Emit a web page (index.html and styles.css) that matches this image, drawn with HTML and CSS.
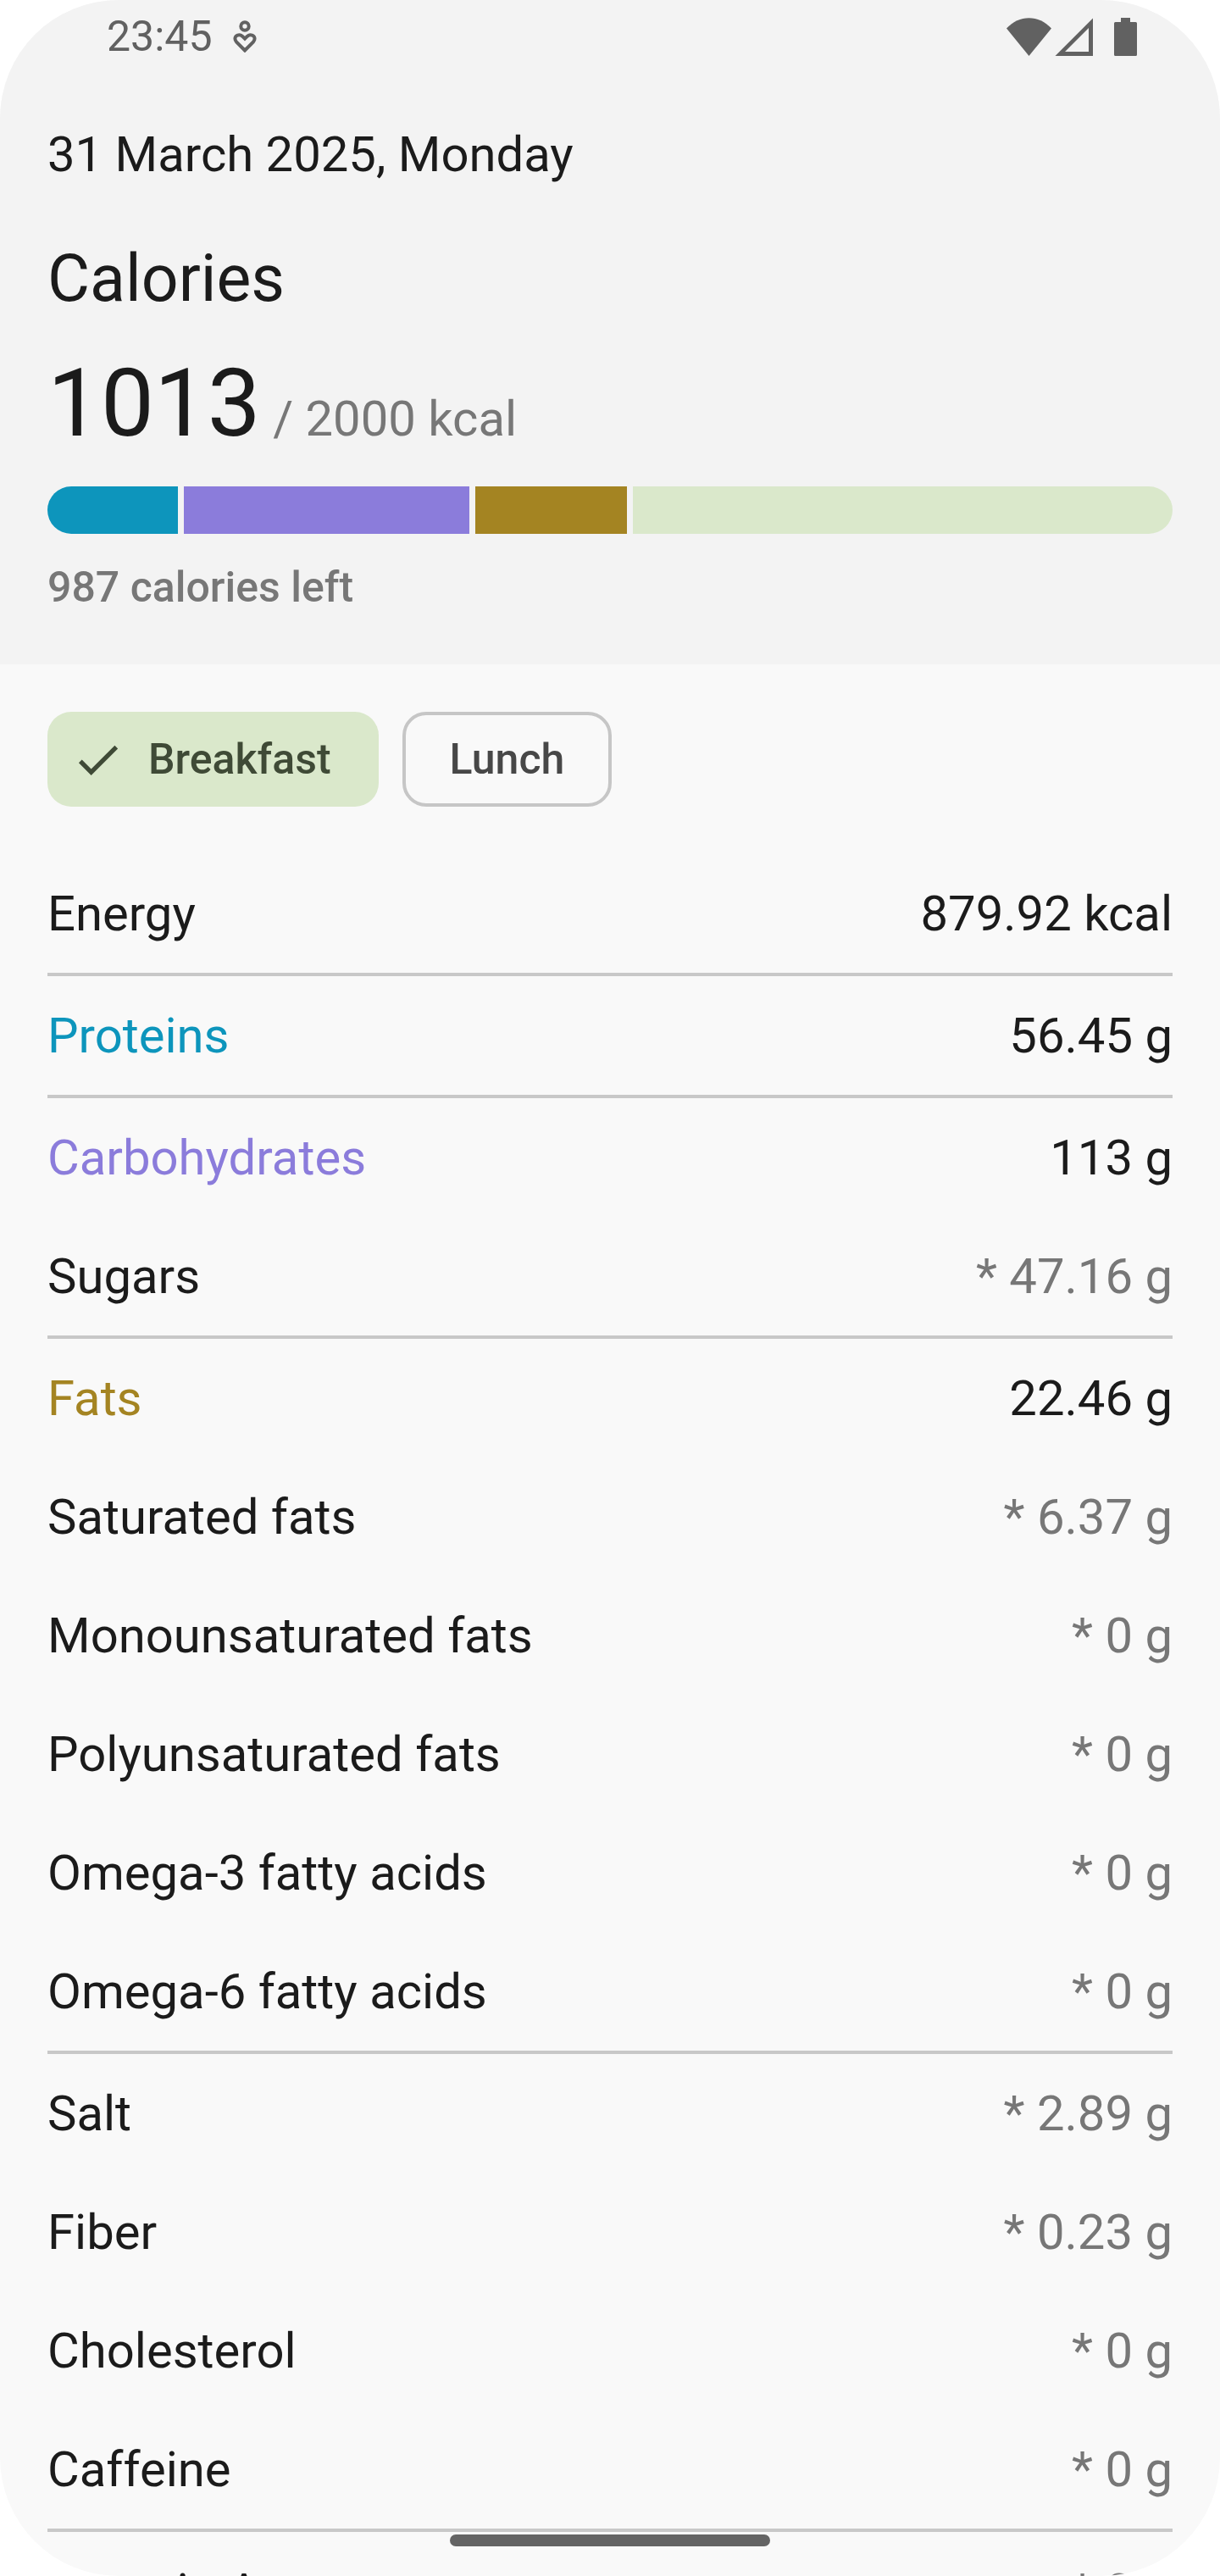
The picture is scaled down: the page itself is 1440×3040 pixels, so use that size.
FILE: index.html
```html
<!DOCTYPE html>
<html lang="en">
<head>
    <meta charset="UTF-8">
    <meta name="viewport" content="width=device-width, initial-scale=1.0">
    <title>Calories</title>
    <link rel="stylesheet" href="styles.css">
</head>
<body>
    <div class="screen">
        <header class="summary">
            <div class="status-bar">
                <div class="status-left">
                    <span>23:45</span>
                    <svg width="28" height="38" viewBox="0 0 28 38" fill="none" stroke="currentColor" stroke-width="4" aria-hidden="true">
                        <circle cx="14" cy="7" r="4.7"/>
                        <path d="M14 35.5 L4.2 25.7 C1.2 22.2 2.4 18.6 5.4 17.6 C8.6 16.6 10.4 17.8 14 21.6 C17.6 17.8 19.4 16.6 22.6 17.6 C25.6 18.6 26.8 22.2 23.8 25.7 Z"/>
                    </svg>
                </div>
                <div class="status-right">
                    <svg width="53" height="45" viewBox="0 0 53 45" fill="currentColor" aria-hidden="true">
                        <path d="M0 12.5 C15 -4 38 -4 53 12.5 L26.5 45 Z"/>
                    </svg>
                    <svg width="45" height="45" viewBox="0 0 45 45" fill="currentColor" fill-rule="evenodd" aria-hidden="true">
                        <path d="M45 0.5 V45 H0.5 Z M40 12 V40 H12 Z"/>
                    </svg>
                    <svg class="battery" width="27" height="45" viewBox="0 0 27 45" fill="currentColor" aria-hidden="true">
                        <path d="M8 0 H19 V5 H25.5 Q27 5 27 6.5 V43.5 Q27 45 25.5 45 H1.5 Q0 45 0 43.5 V6.5 Q0 5 1.5 5 H8 Z"/>
                    </svg>
                </div>
            </div>
            <div class="summary-content">
                <p class="date">31 March 2025, Monday</p>
                <h1>Calories</h1>
                <p class="total"><strong>1013</strong> / 2000 kcal</p>
                <div class="progress" role="img" aria-label="1013 of 2000 kcal">
                    <span class="bg-proteins" style="flex-grow: 236"></span>
                    <span class="bg-carbs" style="flex-grow: 516"></span>
                    <span class="bg-fats" style="flex-grow: 274"></span>
                    <span class="bg-left" style="flex-grow: 974"></span>
                </div>
                <p class="left">987 calories left</p>
            </div>
        </header>

        <main>
            <div class="chips">
                <button type="button" class="chip selected" aria-pressed="true">
                    <svg width="63" height="63" viewBox="0 0 24 24" fill="currentColor" aria-hidden="true">
                        <path d="M9 16.17 4.83 12 l-1.42 1.41 L9 19 21 7 l-1.41 -1.41 z"/>
                    </svg>
                    Breakfast
                </button>
                <button type="button" class="chip" aria-pressed="false">Lunch</button>
            </div>

            <table class="nutrients">
                <tbody>
                    <tr><th scope="row">Energy</th><td>879.92 kcal</td></tr>
                </tbody>
                <tbody>
                    <tr><th scope="row" class="proteins">Proteins</th><td>56.45 g</td></tr>
                </tbody>
                <tbody>
                    <tr><th scope="row" class="carbs">Carbohydrates</th><td>113 g</td></tr>
                    <tr><th scope="row">Sugars</th><td class="partial">* 47.16 g</td></tr>
                </tbody>
                <tbody>
                    <tr><th scope="row" class="fats">Fats</th><td>22.46 g</td></tr>
                    <tr><th scope="row">Saturated fats</th><td class="partial">* 6.37 g</td></tr>
                    <tr><th scope="row">Monounsaturated fats</th><td class="partial">* 0 g</td></tr>
                    <tr><th scope="row">Polyunsaturated fats</th><td class="partial">* 0 g</td></tr>
                    <tr><th scope="row">Omega-3 fatty acids</th><td class="partial">* 0 g</td></tr>
                    <tr><th scope="row">Omega-6 fatty acids</th><td class="partial">* 0 g</td></tr>
                </tbody>
                <tbody>
                    <tr><th scope="row">Salt</th><td class="partial">* 2.89 g</td></tr>
                    <tr><th scope="row">Fiber</th><td class="partial">* 0.23 g</td></tr>
                    <tr><th scope="row">Cholesterol</th><td class="partial">* 0 g</td></tr>
                    <tr><th scope="row">Caffeine</th><td class="partial">* 0 g</td></tr>
                </tbody>
                <tbody>
                    <tr><th scope="row">Vitamin A</th><td class="partial">* 0 g</td></tr>
                </tbody>
            </table>
        </main>

        <div class="nav-handle"></div>
    </div>
</body>
</html>
```

FILE: styles.css
```css
* {
    box-sizing: border-box;
}

body {
    margin: 0;
    background-color: #fff;
    color: #1b1b1b;
    font-family: Roboto, sans-serif;
    font-size: 58px;
    line-height: 84px;
}

h1,
p {
    margin: 0;
    font-weight: 400;
}

.screen {
    position: relative;
    height: 100vh;
    overflow: hidden;
    border-radius: 140px;
    background-color: #f9f9f9;
}

/* header */
.summary {
    background-color: #f3f3f3;
}

.status-bar {
    display: flex;
    justify-content: space-between;
    align-items: center;
    height: 84px;
    padding: 2px 98px 0 126px;
    color: #616161;
    font-size: 50px;
}

.status-left {
    display: flex;
    align-items: center;
    gap: 24px;
}

.status-right {
    display: flex;
    align-items: center;
    gap: 4px;
}

.battery {
    margin-left: 21px;
}

.summary-content {
    display: flex;
    flex-direction: column;
    gap: 28px;
    padding: 56px;
}

.date {
    margin-bottom: 28px;
}

h1 {
    font-size: 77px;
    line-height: 98px;
}

.total {
    color: #777;
}

.total strong {
    font-size: 112px;
    font-weight: 400;
    line-height: 140px;
    color: #1b1b1b;
}

.progress {
    display: flex;
    gap: 7px;
    height: 56px;
    border-radius: 28px;
    overflow: hidden;
}

.progress span {
    flex-basis: 0;
}

.bg-proteins {
    background-color: #0d95bc;
}

.bg-carbs {
    background-color: #8b7cdb;
}

.bg-fats {
    background-color: #a48422;
}

.bg-left {
    background-color: #dae8cb;
}

.left {
    font-size: 50px;
    font-weight: 500;
    line-height: 70px;
    color: #777;
}

/* meals */
.chips {
    display: flex;
    gap: 28px;
    padding: 56px;
}

.chip {
    display: flex;
    align-items: center;
    gap: 28px;
    height: 112px;
    padding: 0 52px;
    border: 4px solid #c6c6c6;
    border-radius: 28px;
    background: none;
    color: #474747;
    font-family: inherit;
    font-size: 50px;
    font-weight: 500;
    cursor: pointer;
}

.chip.selected {
    padding: 0 56px 0 28px;
    border: none;
    background-color: #dae8cb;
    color: #3f4a36;
}

/* nutrients */
.nutrients {
    width: 100%;
    padding: 0 56px;
    border-spacing: 0;
}

.nutrients th,
.nutrients td {
    padding: 28px 0;
    font-weight: 400;
    text-align: left;
}

.nutrients td {
    text-align: right;
}

.nutrients tbody:not(:last-child) tr:last-child th,
.nutrients tbody:not(:last-child) tr:last-child td {
    border-bottom: 4px solid #c8c8c8;
}

.nutrients .partial {
    color: #777;
}

.proteins {
    color: #0d95bc;
}

.carbs {
    color: #8b7cdb;
}

.fats {
    color: #a48422;
}

.nav-handle {
    position: absolute;
    bottom: 35px;
    left: 50%;
    width: 378px;
    height: 14px;
    margin-left: -189px;
    border-radius: 7px;
    background-color: #646464;
}
```
